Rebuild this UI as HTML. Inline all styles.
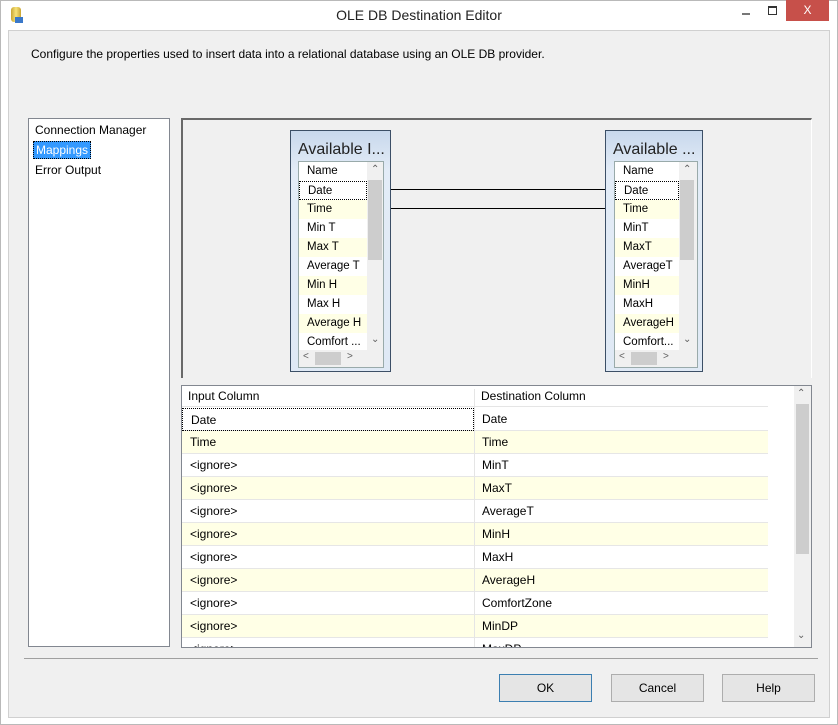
<!DOCTYPE html><html><head><style>
*{margin:0;padding:0;box-sizing:border-box}
body{width:838px;height:725px;background:#fff;font-family:"Liberation Sans",sans-serif;font-size:12px;color:#000;position:relative;overflow:hidden}
.a{position:absolute}
.win{left:0;top:0;width:838px;height:725px;border:1px solid #b9b9b9;background:#fff}
.client{left:8px;top:30px;width:822px;height:688px;background:#f0f0f0;border:1px solid #d0d0d0}
.box{background:linear-gradient(#c8d8ec,#e3ecf7 40px,#dfe9f5);border:1px solid #3c4f66}
.row{position:absolute;left:0;width:68px;height:19px;line-height:19px;padding-left:8px;font-size:11.5px;white-space:nowrap;overflow:hidden}
.y{background:#ffffe6}
.g{position:absolute;left:0;width:586px;height:23px;line-height:23px;border-bottom:1px solid #e6e6e6}
.g span{position:absolute;top:0;padding-left:8px}
.btn{position:absolute;top:674px;width:93px;height:28px;border:1px solid #adadad;background:#e5e5e5;text-align:center;line-height:26px;font-size:12px}
.ar{position:absolute;font-size:10px;color:#606060}
</style></head><body>
<div class="a win"></div>
<div class="a" style="left:11px;top:7px;width:10px;height:15px;background:linear-gradient(90deg,#c9a532,#f7e27a,#c9a532);border-radius:3px"></div>
<div class="a" style="left:15px;top:17px;width:8px;height:6px;background:#3a78c9"></div>
<div class="a" style="left:0;top:7px;width:838px;text-align:center;font-size:14px;color:#222">OLE DB Destination Editor</div>
<div class="a" style="left:742px;top:13px;width:8px;height:2px;background:#777"></div>
<div class="a" style="left:768px;top:6px;width:9px;height:9px;border:1px solid #333;border-top-width:2px"></div>
<div class="a" style="left:786px;top:0;width:43px;height:21px;background:#c7504a;color:#fff;text-align:center;line-height:21px;font-size:12px">X</div>
<div class="a client"></div>
<div class="a" style="left:31px;top:47px;font-size:12px">Configure the properties used to insert data into a relational database using an OLE DB provider.</div>
<div class="a" style="left:28px;top:118px;width:142px;height:529px;background:#fff;border:1px solid #828790"></div>
<div class="a" style="left:35px;top:123px">Connection Manager</div>
<div class="a" style="left:33px;top:141px;background:#3399ff;color:#fff;padding:1px 2px;border:1px dotted #000">Mappings</div>
<div class="a" style="left:35px;top:163px">Error Output</div>
<div class="a" style="left:181px;top:118px;width:631px;height:260px;border-top:2px solid #696969;border-left:2px solid #696969;border-right:1px solid #fff;background:#f0f0f0"></div>
<div class="a" style="left:390px;top:189px;width:215px;height:1px;background:#000"></div>
<div class="a" style="left:390px;top:208px;width:215px;height:1px;background:#000"></div>
<div class="a box" style="left:290px;top:130px;width:101px;height:242px">
<div class="a" style="left:7px;top:10px;font-size:16px;color:#222">Available I...</div>
<div class="a" style="left:7px;top:30px;width:86px;height:207px;background:#fff;border:1px solid #9aa">
<div class="row" style="top:0">Name</div>
<div class="row" style="top:19px;border:1px dotted #000">Date</div>
<div class="row y" style="top:38px">Time</div>
<div class="row" style="top:57px">Min T</div>
<div class="row y" style="top:76px">Max T</div>
<div class="row" style="top:95px">Average T</div>
<div class="row y" style="top:114px">Min H</div>
<div class="row" style="top:133px">Max H</div>
<div class="row y" style="top:152px">Average H</div>
<div class="row" style="top:171px">Comfort ...</div>
<div class="a" style="left:68px;top:0;width:16px;height:188px;background:#f0f0f0"></div>
<div class="a" style="left:69px;top:18px;width:14px;height:80px;background:#cdcdcd"></div>
<div class="ar" style="left:72px;top:2px">&#8963;</div><div class="ar" style="left:72px;top:172px">&#8964;</div>
<div class="a" style="left:0;top:188px;width:84px;height:17px;background:#f0f0f0"></div>
<div class="a" style="left:16px;top:190px;width:26px;height:13px;background:#cdcdcd"></div>
<div class="ar" style="left:4px;top:189px">&lt;</div><div class="ar" style="left:48px;top:189px">&gt;</div>
</div></div>
<div class="a box" style="left:605px;top:130px;width:98px;height:242px">
<div class="a" style="left:7px;top:10px;font-size:16px;color:#222">Available ...</div>
<div class="a" style="left:8px;top:30px;width:84px;height:207px;background:#fff;border:1px solid #9aa">
<div class="row" style="top:0">Name</div>
<div class="row" style="top:19px;border:1px dotted #000;width:64px">Date</div>
<div class="row y" style="top:38px;width:64px">Time</div>
<div class="row" style="top:57px;width:64px">MinT</div>
<div class="row y" style="top:76px;width:64px">MaxT</div>
<div class="row" style="top:95px;width:64px">AverageT</div>
<div class="row y" style="top:114px;width:64px">MinH</div>
<div class="row" style="top:133px;width:64px">MaxH</div>
<div class="row y" style="top:152px;width:64px">AverageH</div>
<div class="row" style="top:171px;width:64px">Comfort...</div>
<div class="a" style="left:64px;top:0;width:18px;height:188px;background:#f0f0f0"></div>
<div class="a" style="left:65px;top:18px;width:14px;height:80px;background:#cdcdcd"></div>
<div class="ar" style="left:68px;top:2px">&#8963;</div><div class="ar" style="left:68px;top:172px">&#8964;</div>
<div class="a" style="left:0;top:188px;width:82px;height:17px;background:#f0f0f0"></div>
<div class="a" style="left:16px;top:190px;width:26px;height:13px;background:#cdcdcd"></div>
<div class="ar" style="left:4px;top:189px">&lt;</div><div class="ar" style="left:48px;top:189px">&gt;</div>
</div></div>
<div class="a" style="left:181px;top:385px;width:631px;height:263px;background:#fff;border:1px solid #828790;overflow:hidden">
<div class="a" style="left:0;top:0;width:586px;height:21px;border-bottom:1px solid #e5e5e5;background:#fff">
<span class="a" style="left:6px;top:3px">Input Column</span><span class="a" style="left:292px;top:3px;border-left:1px solid #e5e5e5;padding-left:6px;height:20px">Destination Column</span></div>
<div class="g" style="top:22px"><span style="left:0;width:292px;height:23px;border:1px dotted #000">Date</span><span style="left:292px">Date</span></div>
<div class="g y" style="top:45px"><span>Time</span><span style="left:292px">Time</span></div>
<div class="g" style="top:68px"><span>&lt;ignore&gt;</span><span style="left:292px">MinT</span></div>
<div class="g y" style="top:91px"><span>&lt;ignore&gt;</span><span style="left:292px">MaxT</span></div>
<div class="g" style="top:114px"><span>&lt;ignore&gt;</span><span style="left:292px">AverageT</span></div>
<div class="g y" style="top:137px"><span>&lt;ignore&gt;</span><span style="left:292px">MinH</span></div>
<div class="g" style="top:160px"><span>&lt;ignore&gt;</span><span style="left:292px">MaxH</span></div>
<div class="g y" style="top:183px"><span>&lt;ignore&gt;</span><span style="left:292px">AverageH</span></div>
<div class="g" style="top:206px"><span>&lt;ignore&gt;</span><span style="left:292px">ComfortZone</span></div>
<div class="g y" style="top:229px"><span>&lt;ignore&gt;</span><span style="left:292px">MinDP</span></div>
<div class="g" style="top:252px"><span>&lt;ignore&gt;</span><span style="left:292px">MaxDP</span></div>
<div class="a" style="left:292px;top:22px;width:1px;height:240px;background:#e5e5e5"></div>
<div class="a" style="left:612px;top:0;width:17px;height:262px;background:#f0f0f0"></div>
<div class="a" style="left:614px;top:18px;width:13px;height:150px;background:#cdcdcd"></div>
<div class="ar" style="left:615px;top:2px">&#8963;</div>
<div class="ar" style="left:615px;top:244px">&#8964;</div>
</div>
<div class="a" style="left:24px;top:658px;width:794px;height:1px;background:#a0a0a0"></div>
<div class="btn" style="left:499px;border-color:#3c7fb1">OK</div>
<div class="btn" style="left:611px">Cancel</div>
<div class="btn" style="left:722px">Help</div>
</body></html>
